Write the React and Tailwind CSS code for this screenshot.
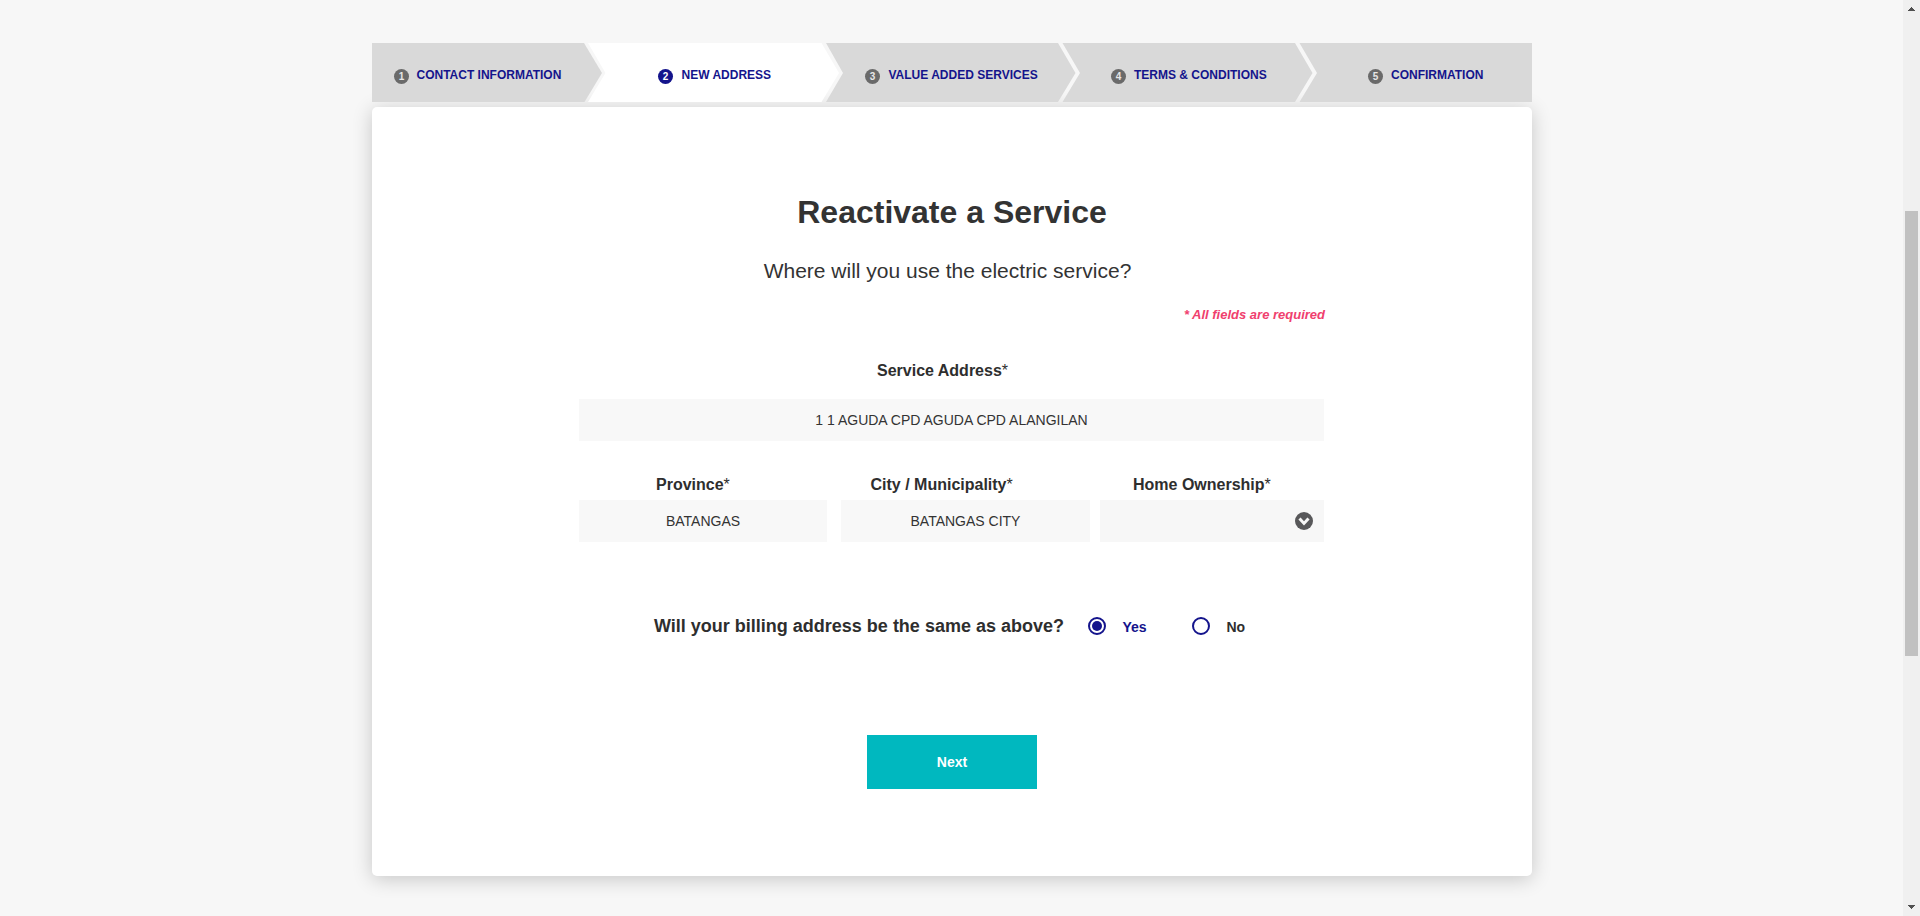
import React from "react";

function Step({ number, label, active = false, shape, padding }) {
  return (
    <li className={`flex h-[59px] shrink-0 items-start ${active ? "bg-white" : "bg-[#d9d9d9]"} ${shape} ${padding}`}>
      <span
        className={`mt-[26px] flex size-[15px] shrink-0 items-center justify-center rounded-full text-[10px] leading-none font-bold ${
          active ? "bg-[#14148c] text-white" : "bg-[#6a6a6a] text-[#e6e6e6]"
        }`}
      >
        {number}
      </span>
      <span className="mt-6 text-xs leading-4 font-bold whitespace-nowrap text-[#14148c]">{label}</span>
    </li>
  );
}

function Steps() {
  return (
    <ol className="flex h-[59px] w-[1160px]">
      <Step
        number="1"
        label="CONTACT INFORMATION"
        shape="w-[230px] [clip-path:polygon(0_0,212px_0,230px_30px,212.5px_59px,0_59px)]"
        padding="gap-[7.5px] pl-[22px]"
      />
      <Step
        number="2"
        label="NEW ADDRESS"
        active
        shape="-ml-[14px] w-[251px] [clip-path:polygon(0_0,233.5px_0,251px_30px,233.5px_59px,0_59px,17.5px_30px)]"
        padding="gap-[8.5px] pl-[70px]"
      />
      <Step
        number="3"
        label="VALUE ADDED SERVICES"
        shape="-ml-[13px] w-[250px] [clip-path:polygon(0_0,232px_0,249.5px_30px,232px_59px,0_59px,17px_30px)]"
        padding="gap-[8.5px] pl-[39px]"
      />
      <Step
        number="4"
        label="TERMS & CONDITIONS"
        shape="-ml-[14px] w-[251px] [clip-path:polygon(0.5px_0,233px_0,250.5px_30px,233px_59px,0.5px_59px,18px_30px)]"
        padding="gap-2 pl-[49px]"
      />
      <Step
        number="5"
        label="CONFIRMATION"
        shape="-ml-[14px] w-[233px] [clip-path:polygon(0.5px_0,233px_0,233px_59px,0.5px_59px,18px_30px)]"
        padding="gap-2 pl-[69px]"
      />
    </ol>
  );
}

function FieldLabel({ children, className = "" }) {
  return (
    <label className={`block text-base leading-[18px] font-bold whitespace-nowrap text-[#2e2e2e] ${className}`}>
      {children}
      <span className="font-normal">*</span>
    </label>
  );
}

function Field({ value, className = "" }) {
  return (
    <div className={`flex h-[42px] items-center justify-center bg-[#f8f8f8] text-sm leading-4 whitespace-nowrap text-[#333] ${className}`}>
      {value}
    </div>
  );
}

function Radio({ label, checked = false, className = "" }) {
  return (
    <div className={`flex items-start ${className}`}>
      <span className="mt-px flex size-[18px] items-center justify-center rounded-full border-2 border-[#14148c]">
        {checked && <span className="size-[10px] rounded-full bg-[#14148c]" />}
      </span>
      <span className={`mt-[3px] ml-[16.5px] text-sm leading-4 font-bold ${checked ? "text-[#14148c]" : "text-[#2e2e2e]"}`}>
        {label}
      </span>
    </div>
  );
}

function Scrollbar() {
  return (
    <div className="flex h-full w-[17px] flex-col items-center bg-[#f0f0f0]">
      <svg className="mt-[7px] h-1 w-[7px]" viewBox="0 0 7 4" shapeRendering="crispEdges" fill="#505050">
        <path d="M3 0h1v1h1v1h1v1h1v1H0V3h1V2h1V1h1z" />
      </svg>
      <div className="mt-[200px] h-[445px] w-[13px] bg-[#c1c1c1]" />
      <svg className="mt-auto mb-[7px] h-1 w-[7px]" viewBox="0 0 7 4" shapeRendering="crispEdges" fill="#505050">
        <path d="M0 0h7v1H6v1H5v1H4v1H3V3H2V2H1V1H0z" />
      </svg>
    </div>
  );
}

export default function App() {
  return (
    <div className="flex h-[916px] w-[1920px] overflow-hidden bg-[#f7f7f7] font-['Liberation_Sans',Arial,sans-serif]">
      <main className="flex w-[1903px] flex-col pt-[43px] pl-[372px]">
        <div className="relative z-10">
          <Steps />
        </div>
        <section className="mt-[5px] h-[769px] w-[1160px] rounded-[5px] bg-white px-[207px] pt-[87px] shadow-[0_3px_20px_rgba(0,0,0,0.2)]">
          <h1 className="text-center text-[32px] leading-9 font-bold text-[#333]">Reactivate a Service</h1>
          <p className="mt-[29px] pr-[9px] text-center text-[21px] leading-6 text-[#333]">
            Where will you use the electric service?
          </p>
          <p className="mt-6 text-right text-[13px] leading-[15px] font-bold text-[#f0406e] italic">
            * All fields are required
          </p>

          <FieldLabel className="mt-10 pl-[298px]">Service Address</FieldLabel>
          <Field className="mt-[19px] w-[745px]" value="1 1 AGUDA CPD AGUDA CPD ALANGILAN" />

          <div className="mt-[35px] flex">
            <div className="w-[248px]">
              <FieldLabel className="pl-[77px]">Province</FieldLabel>
              <Field className="mt-[6px]" value="BATANGAS" />
            </div>
            <div className="ml-[14px] w-[249px]">
              <FieldLabel className="pl-[29.5px]">City / Municipality</FieldLabel>
              <Field className="mt-[6px]" value="BATANGAS CITY" />
            </div>
            <div className="ml-[10px] w-[224px]">
              <FieldLabel className="pl-[33px]">Home Ownership</FieldLabel>
              <div className="mt-[6px] flex h-[42px] items-center justify-end bg-[#f7f7f7] pr-[11px]">
                <svg className="size-[18px]" viewBox="0 0 18 18">
                  <circle cx="9" cy="9" r="9" fill="#58585a" />
                  <path d="M3.4 7.6 5.6 5.6 9 9.2l3.4-3.6 2.2 2L9 13.4z" fill="#f7f7f7" />
                </svg>
              </div>
            </div>
          </div>

          <div className="mt-[74px] flex h-5 items-start pl-[75px]">
            <p className="w-[434px] text-lg leading-5 font-bold whitespace-nowrap text-[#2e2e2e]">
              Will your billing address be the same as above?
            </p>
            <Radio label="Yes" checked className="w-[104px]" />
            <Radio label="No" />
          </div>

          <button className="mt-[99px] ml-[288px] block h-[54px] w-[170px] bg-[#00b8bf] text-sm leading-4 font-bold text-white">
            Next
          </button>
        </section>
      </main>
      <Scrollbar />
    </div>
  );
}
